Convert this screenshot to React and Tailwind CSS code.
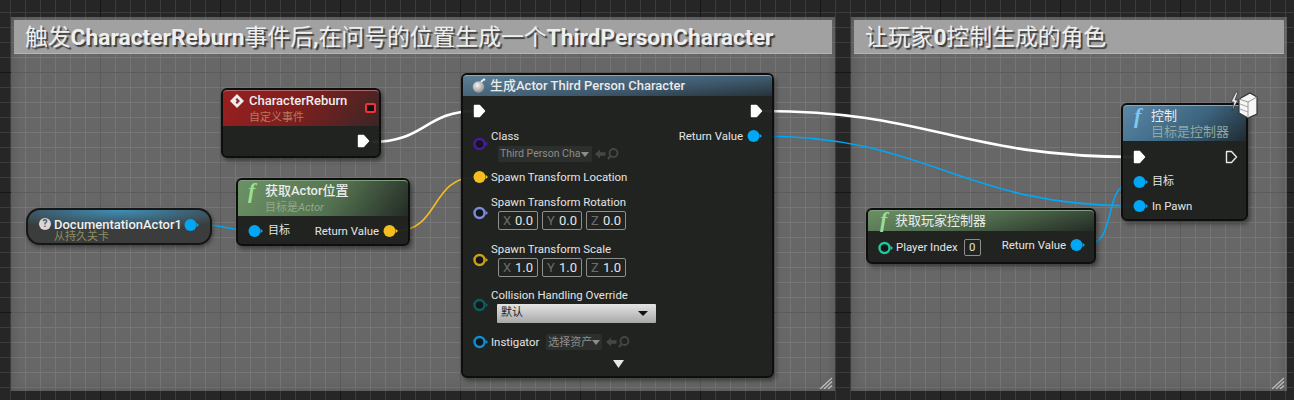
import React from 'react';

const BLUE = '#00a7f5';
const YELLOW = '#f5bd1f';

function Pin({ color = BLUE, hollow = false, className = '' }) {
  return (
    <svg width="15" height="14" viewBox="0 0 15 14" className={`shrink-0 ${className}`}>
      <circle cx="6.5" cy="7" r={hollow ? 5 : 6} fill={hollow ? '#14161a' : color} stroke={color} strokeWidth={hollow ? 2.4 : 0} />
      <path d="M12.6 4.8 L15 7 L12.6 9.2 Z" fill={color} />
    </svg>
  );
}

function ExecPin({ hollow = false, className = '' }) {
  return (
    <svg width="13" height="14" viewBox="0 0 13 14" className={`shrink-0 ${className}`}>
      <path
        d="M1.5 1.5 H6.5 L11.5 7 L6.5 12.5 H1.5 Z"
        fill={hollow ? 'none' : '#fff'}
        stroke={hollow ? '#e8e8e8' : '#fff'}
        strokeWidth="1.4"
        strokeLinejoin="round"
      />
    </svg>
  );
}

function FnIcon({ color }) {
  return (
    <span className={`font-['Liberation_Serif',serif] italic font-bold text-[22px] leading-none w-[15px] shrink-0 ${color}`}>f</span>
  );
}

function Vec({ values }) {
  return (
    <div className="flex gap-[4px] ml-[7px]">
      {values.map(([axis, v]) => (
        <div key={axis} className="w-[40px] h-[19px] border border-[#8e8e8e] rounded-[2px] flex items-center justify-between px-[4px] text-[13px] leading-none">
          <span className="text-[#6c6c6c]">{axis}</span>
          <span className="text-[#e6e6e6]">{v}</span>
        </div>
      ))}
    </div>
  );
}

function AssetTools() {
  return (
    <svg width="30" height="14" viewBox="0 0 30 14" className="shrink-0">
      <path d="M1 7 L6 2.5 V5.2 H11.5 V8.8 H6 V11.5 Z" fill="#454745" />
      <circle cx="19.5" cy="6" r="4" fill="none" stroke="#454745" strokeWidth="1.8" />
      <path d="M16.5 9 L14 12" stroke="#454745" strokeWidth="2" />
    </svg>
  );
}

function ResizeGrip({ className }) {
  return (
    <svg width="14" height="12" viewBox="0 0 14 12" className={`absolute ${className}`}>
      <path d="M1 12 L13 1 M5 12 L13 4.5 M9 12 L13 8.5" stroke="#bdbdbd" strokeWidth="1.3" />
    </svg>
  );
}

function CommentBox({ children, className }) {
  return (
    <div className={`absolute top-[17px] h-[374px] bg-white/30 shadow-[inset_0_0_10px_rgba(50,50,50,0.35)] pt-[3px] px-[3px] ${className}`}>
      <div className="h-[34px] bg-[#a1a1a1] border-b border-[#b4b4b4] pl-[11px] pt-[3px] flex items-center text-[22.8px] leading-none text-[#efefef] whitespace-nowrap [text-shadow:2px_2px_1px_#3c3c3c]">
        {children}
      </div>
      <ResizeGrip className="right-[2px] bottom-[2px]" />
    </div>
  );
}

export default function App() {
  return (
    <div className="relative w-[1294px] h-[400px] overflow-hidden font-['Roboto','Noto_Sans_CJK_SC',sans-serif] text-[11.4px] text-[#e4e4e4] bg-[#262626] bg-[linear-gradient(to_right,#161616_1px,transparent_1px),linear-gradient(to_bottom,#161616_1px,transparent_1px),linear-gradient(to_right,#3c3c3c_1px,transparent_1px),linear-gradient(to_bottom,#3c3c3c_1px,transparent_1px)] bg-[size:120px_120px,120px_120px,15px_15px,15px_15px] bg-[position:100px_0,0_72px,10px_0,0_12px]">
      <CommentBox className="left-[11px] w-[824px]">
        触发<b className="font-bold">CharacterReburn</b>事件后<b className="font-bold">,</b>在问号的位置生成一个<b className="font-bold">ThirdPersonCharacter</b>
      </CommentBox>
      <CommentBox className="left-[851px] w-[436px]">
        让玩家<b className="font-bold">0</b>控制生成的角色
      </CommentBox>

      {/* wires */}
      <svg className="absolute inset-0" width="1294" height="400" fill="none">
        <path d="M372 142 C 425 142, 425 111, 476 111" stroke="#fff" strokeWidth="2.6" />
        <path d="M763 111 C 930 111, 960 157, 1135 157" stroke="#fff" strokeWidth="2.6" />
        <path d="M762 136 C 930 136, 960 206, 1135 206" stroke={BLUE} strokeWidth="1.6" />
        <path d="M396 231 C 440 231, 430 177, 476 177" stroke={YELLOW} strokeWidth="1.6" />
        <path d="M198 224 C 220 224, 230 231, 255 231" stroke={BLUE} strokeWidth="1.6" />
        <path d="M1085 245 C 1120 245, 1100 182, 1135 182" stroke={BLUE} strokeWidth="1.6" />
      </svg>

      {/* 自定义事件 */}
      <div className="absolute left-[221px] top-[88px] w-[160px] h-[70px] rounded-[6px] border-2 border-[#0e0e0e] bg-[#1d201e]/95 shadow-[2px_3px_4px_rgba(0,0,0,0.4)]">
        <div className="relative h-[36px] rounded-t-[4px] pl-[6px] pt-[1px] border-t border-[#a86a6a] bg-[linear-gradient(125deg,#9a1f1f_0%,#7c1f1e_50%,#3a2626_100%)]">
          <div className="flex items-center gap-[4px] h-[17px]">
            <svg width="16" height="16" viewBox="0 0 16 16" className="shrink-0">
              <path d="M8 1 L15 8 L8 15 L1 8 Z" fill="#eee" />
              <path d="M8 5 L11 8 L8 11 L6.5 9.5 L8 8 L6.5 6.5 Z" fill="#8c2a2a" />
            </svg>
            <span className="text-[13px] font-medium leading-none text-[#ececec]">CharacterReburn</span>
          </div>
          <div className="pl-[20px] mt-[2px] text-[11px] leading-[14px] text-[#b47a60]">自定义事件</div>
          <div className="absolute right-[3px] top-[12px] w-[11px] h-[10px] rounded-[2px] border-2 border-[#f2303a] bg-[#111]" />
        </div>
        <div className="flex justify-end items-center h-[30px] pr-[9px]">
          <ExecPin />
        </div>
      </div>

      {/* 持久关卡引用 */}
      <div className="absolute left-[26px] top-[208px] w-[186px] h-[37px] rounded-[14px] border-2 border-[#161616] bg-[#3b3d3d] bg-[radial-gradient(ellipse_70%_60%_at_50%_0%,#3f8fb8,transparent)] shadow-[1px_2px_4px_rgba(0,0,0,0.4)] pl-[11px] flex gap-[3px]">
        <div className="w-[12px] h-[12px] mt-[8px] rounded-full bg-[#d8d8d8] text-[#555] text-[10px] font-bold leading-[12px] text-center shrink-0">?</div>
        <div className="flex-1 min-w-0">
          <div className="text-[13px] font-medium leading-none mt-[8px] text-[#efefef] whitespace-nowrap">DocumentationActor1</div>
          <div className="text-[11px] leading-[13px] text-[#8d8d60] -mt-[1px]">从持久关卡</div>
        </div>
        <Pin className="absolute left-[156px] top-[8px]" />
      </div>

      {/* 获取Actor位置 */}
      <div className="absolute left-[236px] top-[178px] w-[174px] h-[68px] rounded-[6px] border-2 border-[#0e0e0e] bg-[#1d201e]/95 shadow-[2px_3px_4px_rgba(0,0,0,0.4)]">
        <div className="h-[36px] rounded-t-[4px] pl-[10px] pt-[1px] border-t border-[#80a080] bg-[linear-gradient(125deg,#6d9166_0%,#547350_55%,#232b25_100%)]">
          <div className="flex items-center gap-[2px] h-[17px]">
            <FnIcon color="text-[#9adf92]" />
            <span className="text-[13px] font-medium leading-none text-[#ececec] whitespace-nowrap">获取Actor位置</span>
          </div>
          <div className="pl-[17px] mt-[2px] text-[11px] leading-[14px] text-[#93a88c]">目标是<span className="italic">Actor</span></div>
        </div>
        <div className="flex items-center justify-between h-[30px] pl-[10px] pr-[10px]">
          <div className="flex items-center gap-[5px]"><Pin /><span className="text-[11px] pt-[1px]">目标</span></div>
          <div className="flex items-center gap-[4px]"><span className="pt-[1px]">Return Value</span><Pin color={YELLOW} /></div>
        </div>
      </div>

      {/* 生成Actor */}
      <div className="absolute left-[461px] top-[73px] w-[313px] h-[305px] rounded-[6px] border-2 border-[#0e0e0e] bg-[#1d201e]/95 shadow-[2px_3px_4px_rgba(0,0,0,0.4)]">
        <div className="h-[21px] rounded-t-[4px] pl-[9px] pb-[2px] flex items-center gap-[4px] border-t border-[#8fa5b3] bg-[linear-gradient(175deg,#5d7f96_0%,#3f5a6e_60%,#27333b_100%)]">
          <svg width="14" height="15" viewBox="0 0 14 15" className="shrink-0">
            <defs>
              <radialGradient id="bomb" cx="0.4" cy="0.35" r="0.8">
                <stop offset="0" stopColor="#f4f4f4" />
                <stop offset="1" stopColor="#7a7a7a" />
              </radialGradient>
            </defs>
            <circle cx="6.5" cy="9" r="5.8" fill="url(#bomb)" />
            <path d="M9 4 L11 2" stroke="#eee" strokeWidth="2" />
            <circle cx="12" cy="1.6" r="1.2" fill="#fff" />
          </svg>
          <span className="text-[13px] font-medium leading-none text-[#eaeaea] whitespace-nowrap">生成Actor Third Person Character</span>
        </div>

        <div className="flex items-center justify-between h-[30px] pl-[10px] pr-[9px]">
          <ExecPin />
          <ExecPin />
        </div>

        <div className="flex justify-between h-[36px] pl-[10px] pr-[10px]">
          <div className="flex items-center gap-[3px]">
            <Pin color="#4a1a9e" hollow />
            <div className="flex flex-col">
              <span className="leading-[20px]">Class</span>
              <div className="flex items-center gap-[2px] h-[16px] ml-[7px]">
                <div className="w-[94px] h-[16px] rounded-[2px] bg-[#2d2f2d] flex items-center pl-[2px] gap-[1px] text-[10.5px] text-[#8c8c8c] leading-none whitespace-nowrap overflow-hidden">
                  <span>Third Person Cha</span>
                  <svg width="8" height="5" viewBox="0 0 8 5" className="shrink-0"><path d="M0 0 H8 L4 5 Z" fill="#8c8c8c" /></svg>
                </div>
                <AssetTools />
              </div>
            </div>
          </div>
          <div className="flex items-center gap-[4px] h-[20px]"><span className="pt-[1px]">Return Value</span><Pin /></div>
        </div>

        <div className="flex items-center gap-[3px] h-[20px] mt-[5px] pl-[10px]">
          <Pin color={YELLOW} />
          <span className="pt-[1px]">Spawn Transform Location</span>
        </div>

        <div className="flex items-center gap-[3px] h-[39px] mt-[5px] pl-[10px]">
          <Pin color="#7c8bd8" hollow className="mt-[2px]" />
          <div>
            <div className="leading-[18px]">Spawn Transform Rotation</div>
            <Vec values={[['X', '0.0'], ['Y', '0.0'], ['Z', '0.0']]} />
          </div>
        </div>

        <div className="flex items-center gap-[3px] h-[39px] mt-[8px] pl-[10px]">
          <Pin color="#c9a21c" hollow className="mt-[2px]" />
          <div>
            <div className="leading-[18px]">Spawn Transform Scale</div>
            <Vec values={[['X', '1.0'], ['Y', '1.0'], ['Z', '1.0']]} />
          </div>
        </div>

        <div className="flex items-center gap-[3px] h-[36px] mt-[9px] pl-[10px]">
          <Pin color="#0b5f5c" hollow />
          <div>
            <div className="leading-[16px]">Collision Handling Override</div>
            <div className="w-[159px] h-[19px] ml-[6px] mt-[1px] rounded-[1px] bg-[linear-gradient(to_bottom,#e4e4e4,#a8a8a8)] flex items-center justify-between pl-[4px] pr-[8px] text-[11px] text-[#222]">
              <span>默认</span>
              <svg width="10" height="5" viewBox="0 0 10 5"><path d="M0 0 H10 L5 5 Z" fill="#111" /></svg>
            </div>
          </div>
        </div>

        <div className="flex items-center gap-[3px] h-[20px] mt-[9px] pl-[10px]">
          <Pin color="#0e8fd0" hollow />
          <span className="pt-[1px]">Instigator</span>
          <div className="ml-[4px] w-[56px] h-[16px] rounded-[2px] bg-[#2d2f2d] flex items-center justify-between pl-[2px] pr-[3px] text-[11px] whitespace-nowrap text-[#8c8c8c] leading-none">
            <span>选择资产</span>
            <svg width="8" height="5" viewBox="0 0 8 5" className="shrink-0"><path d="M0 0 H8 L4 5 Z" fill="#8c8c8c" /></svg>
          </div>
          <AssetTools />
        </div>

        <div className="flex justify-center mt-[8px] ml-[1px]">
          <svg width="11" height="8" viewBox="0 0 11 8"><path d="M0 0 H11 L5.5 8 Z" fill="#e8e8e8" /></svg>
        </div>
      </div>

      {/* 获取玩家控制器 */}
      <div className="absolute left-[866px] top-[208px] w-[230px] h-[56px] rounded-[6px] border-2 border-[#0e0e0e] bg-[#1d201e]/95 shadow-[2px_3px_4px_rgba(0,0,0,0.4)]">
        <div className="h-[21px] rounded-t-[4px] pl-[12px] pb-[2px] flex items-center border-t border-[#80a080] bg-[linear-gradient(165deg,#6b8f64_0%,#4f6a4c_50%,#232b25_100%)]">
          <FnIcon color="text-[#9adf92]" />
          <span className="text-[13px] leading-none text-[#ececec] whitespace-nowrap">获取玩家控制器</span>
        </div>
        <div className="flex items-center justify-between h-[32px] pt-[2px] pl-[10px] pr-[9px]">
          <div className="flex items-center gap-[3px]">
            <Pin color="#1fc79a" hollow />
            <span>Player Index</span>
            <div className="ml-[3px] w-[17px] h-[17px] border border-[#8e8e8e] rounded-[2px] flex items-center justify-center leading-none">0</div>
          </div>
          <div className="flex items-center gap-[4px] -mt-[5px]"><span>Return Value</span><Pin /></div>
        </div>
      </div>

      {/* 控制 */}
      <div className="absolute left-[1121px] top-[103px] w-[127px] h-[118px] rounded-[6px] border-2 border-[#0e0e0e] bg-[#1d201e]/95 shadow-[2px_3px_4px_rgba(0,0,0,0.4)]">
        <div className="h-[36px] rounded-t-[4px] pl-[11px] pt-[1px] border-t border-[#8fa5b3] bg-[linear-gradient(140deg,#5a88a8_0%,#3d6580_55%,#1f2a30_100%)]">
          <div className="flex items-center gap-[2px] h-[17px]">
            <FnIcon color="text-[#7cc8f0]" />
            <span className="text-[13px] leading-none text-[#ececec]">控制</span>
          </div>
          <div className="pl-[17px] mt-[1px] text-[13px] leading-[14px] text-[#8fa8a0] whitespace-nowrap">目标是控制器</div>
        </div>
        <div className="flex items-center justify-between h-[32px] pl-[10px] pr-[8px]">
          <ExecPin />
          <ExecPin hollow />
        </div>
        <div className="flex items-center gap-[4px] h-[18px] pl-[10px]"><Pin /><span className="text-[11px] pt-[1px]">目标</span></div>
        <div className="flex items-center gap-[4px] h-[18px] mt-[6px] pl-[10px]"><Pin /><span className="pt-[1px]">In Pawn</span></div>
        <svg width="30" height="28" viewBox="0 0 30 28" className="absolute -right-[12px] -top-[14px]">
          <path d="M8 1 L3 11 H6 L4 20 L10 9 H7 L10 1 Z" fill="#ececec" stroke="#333" strokeWidth="0.8" />
          <path d="M11 8 L22 2 L29 6 V23 L20 27 L11 22 Z" fill="#f6f6f6" stroke="#333" strokeWidth="1.2" />
          <path d="M20 11 V27 M20 11 L11 8 M20 11 L29 6" stroke="#8c8c8c" strokeWidth="0.9" fill="none" />
          <path d="M12 13 L20 16 M12 18 L20 21" stroke="#9c9c9c" strokeWidth="0.9" />
        </svg>
      </div>
    </div>
  );
}
